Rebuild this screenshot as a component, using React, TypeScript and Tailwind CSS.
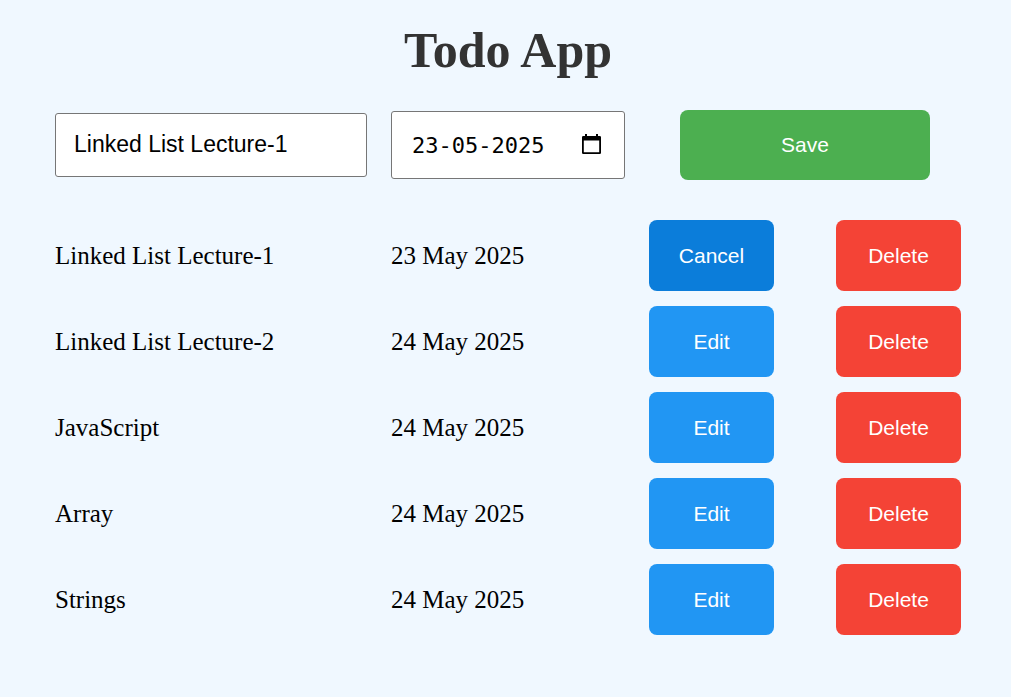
import { useRef, useState } from "react";

type Todo = { id: number; name: string; date: string };

const initialTodos: Todo[] = [
  { id: 1, name: "Linked List Lecture-1", date: "2025-05-23" },
  { id: 2, name: "Linked List Lecture-2", date: "2025-05-24" },
  { id: 3, name: "JavaScript", date: "2025-05-24" },
  { id: 4, name: "Array", date: "2025-05-24" },
  { id: 5, name: "Strings", date: "2025-05-24" },
];

const months = ["January", "February", "March", "April", "May", "June", "July", "August", "September", "October", "November", "December"];

function longDate(date: string) {
  const [y, m, d] = date.split("-");
  return `${d} ${months[Number(m) - 1]} ${y}`;
}

const columns = "grid grid-cols-[minmax(0,336fr)_minmax(0,258fr)_minmax(0,312fr)] items-center";
const rowButton = "h-[71px] w-[125px] cursor-pointer rounded-lg text-[21px] text-white";

export default function App() {
  const [todos, setTodos] = useState(initialTodos);
  const [editing, setEditing] = useState<number | null>(1);
  const [name, setName] = useState(initialTodos[0].name);
  const [date, setDate] = useState("23-05-2025");
  const nextId = useRef(6);

  const clear = () => {
    setEditing(null);
    setName("");
    setDate("");
  };
  const edit = (todo: Todo) => {
    setEditing(todo.id);
    setName(todo.name);
    setDate(todo.date.split("-").reverse().join("-"));
  };
  const save = () => {
    if (!name || !/^\d{2}-\d{2}-\d{4}$/.test(date)) return;
    const iso = date.split("-").reverse().join("-");
    if (editing !== null) {
      setTodos(todos.map((t) => (t.id === editing ? { ...t, name, date: iso } : t)));
    } else {
      setTodos([...todos, { id: nextId.current++, name, date: iso }]);
    }
    clear();
  };

  return (
    <main className="min-h-screen bg-[#f0f8ff] pt-5 pr-[50px] pb-10 pl-[55px] font-['Liberation_Serif',serif] text-black">
      <h1 className="text-center text-[50px] leading-[60px] font-bold text-[#333]">Todo App</h1>
      <div className={`${columns} mt-[30px] font-['Liberation_Sans',sans-serif]`}>
        <div className="flex pr-6">
          <input
            aria-label="Todo name"
            value={name}
            onChange={(e) => setName(e.target.value)}
            className="h-16 w-full rounded-[3px] border border-[#767676] bg-white px-[18px] pb-0.5 text-[23px]"
          />
        </div>
        <div className="mr-6 flex h-[68px] items-center rounded-[3px] border border-[#767676] bg-white pr-[22px] pl-5">
          <input
            aria-label="Due date"
            value={date}
            onChange={(e) => setDate(e.target.value)}
            className="min-w-0 flex-1 font-['DejaVu_Sans_Mono',monospace] text-[22px] outline-none"
          />
          <svg className="h-[22px] w-5 shrink-0" viewBox="0 0 20 22" aria-hidden="true">
            <path
              fill="#000"
              fillRule="evenodd"
              d="M1.3 2H3V0h2v2h9V0h2v2h1.7A1.3 1.3 0 0 1 19 3.3V18.7A1.3 1.3 0 0 1 17.7 20H1.3A1.3 1.3 0 0 1 0 18.7V3.3A1.3 1.3 0 0 1 1.3 2zM1.8 6.5V18.2H17.2V6.5z"
            />
          </svg>
        </div>
        <button onClick={save} className="mx-auto h-[70px] w-[250px] cursor-pointer rounded-lg bg-[#4caf50] text-[21px] text-white">
          Save
        </button>
      </div>
      <ul className="mt-10 flex flex-col gap-[15px]">
        {todos.map((todo) => (
          <li key={todo.id} className={`${columns} text-[25px]`}>
            <span>{todo.name}</span>
            <span>{longDate(todo.date)}</span>
            <div className="flex justify-between font-['Liberation_Sans',sans-serif]">
              {editing === todo.id ? (
                <button onClick={clear} className={`${rowButton} bg-[#0b7dda]`}>Cancel</button>
              ) : (
                <button onClick={() => edit(todo)} className={`${rowButton} bg-[#2196f3]`}>Edit</button>
              )}
              <button onClick={() => setTodos(todos.filter((t) => t.id !== todo.id))} className={`${rowButton} bg-[#f44336]`}>
                Delete
              </button>
            </div>
          </li>
        ))}
      </ul>
    </main>
  );
}
